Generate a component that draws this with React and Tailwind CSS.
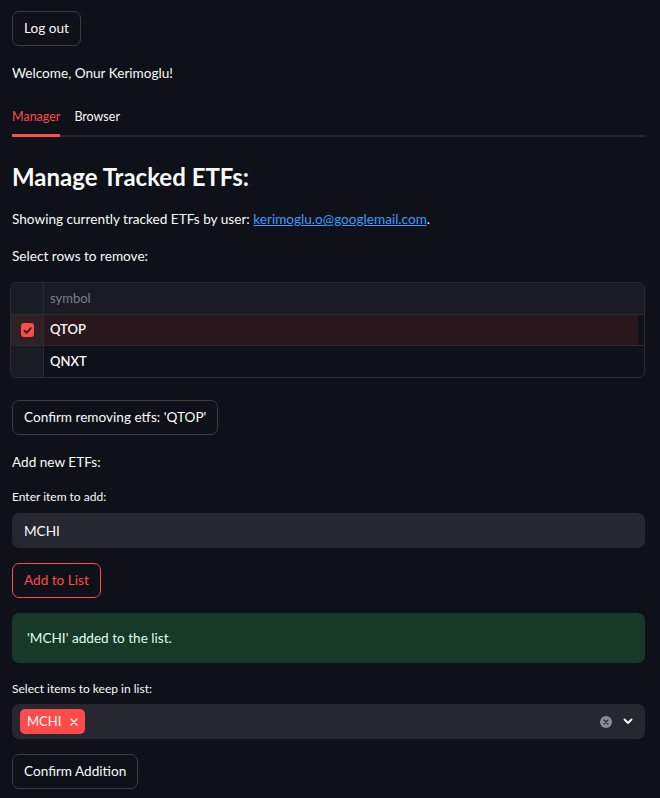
import { useState } from "react";

const font = { fontFamily: "Lato, 'Noto Sans', sans-serif" };

function Button({ children, danger }) {
  return (
    <button
      type="button"
      className={`h-[35px] px-[11px] rounded-[7px] border text-[13.6px] bg-[#0e1117] ${
        danger ? "border-[#ff4b4b] text-[#ff4b4b]" : "border-[#3a3c44] text-[#fafafa]"
      }`}
    >
      {children}
    </button>
  );
}

export default function App() {
  const [tab, setTab] = useState("Manager");
  const [item, setItem] = useState("MCHI");
  const rows = [
    { symbol: "QTOP", checked: true },
    { symbol: "QNXT", checked: false },
  ];

  return (
    <div style={font} className="min-h-[798px] bg-[#0e1117] text-[#fafafa] px-3 pt-[11px] text-[13.6px]">
      <div className="flex">
        <Button>Log out</Button>
      </div>

      <p className="mt-[17px] leading-[20px]">Welcome, Onur Kerimoglu!</p>

      {/* Tabs */}
      <div className="mt-[26px] flex gap-[14px] border-b-2 border-[#262730] mr-[3px]">
        {["Manager", "Browser"].map((t) => (
          <button
            key={t}
            type="button"
            onClick={() => setTab(t)}
            className={`pb-[9px] text-[12.5px] leading-[16px] -mb-[2px] border-b-[3px] ${
              tab === t ? "text-[#ff4b4b] border-[#ff4b4b]" : "text-[#fafafa] border-transparent"
            }`}
          >
            {t}
          </button>
        ))}
      </div>

      <h2 className="mt-[24px] text-[24px] font-bold leading-[32px]">Manage Tracked ETFs:</h2>

      <p className="mt-[16px] leading-[20px]">
        Showing currently tracked ETFs by user:{" "}
        <a href="#" className="text-[#3b9cff] underline">kerimoglu.o@googlemail.com</a>.
      </p>

      <p className="mt-[17px] leading-[20px]">Select rows to remove:</p>

      {/* Data grid */}
      <div className="mt-[16px] -ml-[2px] mr-[3px] rounded-[6px] border border-[#2a2c34] overflow-hidden text-[13px]">
        <div className="flex h-[32px] bg-[#1a1c24] border-b border-[#2a2c34]">
          <div className="w-[33px] border-r border-[#2a2c34]" />
          <div className="flex-1 flex items-center px-[6px] text-[#7d7f86] mr-[6px]">symbol</div>
        </div>
        {rows.map((r, i) => (
          <div
            key={r.symbol}
            className={`flex h-[31px] ${i < rows.length - 1 ? "border-b border-[#2a2c34]" : ""}`}
          >
            <div className={`w-[33px] flex items-center justify-center border-r border-[#2a2c34] ${r.checked ? "bg-[#2f2227]" : "bg-[#1a1c24]"}`}>
              {r.checked && (
                <span className="w-[13px] h-[14px] rounded-[3px] bg-[#ff4b4b] flex items-center justify-center">
                  <svg width="9" height="9" viewBox="0 0 10 10" fill="none">
                    <path d="M1.5 5.2 L4 7.6 L8.6 2.4" stroke="#1a1c24" strokeWidth="1.8" strokeLinecap="round" strokeLinejoin="round" />
                  </svg>
                </span>
              )}
            </div>
            <div className={`flex-1 flex items-center px-[6px] font-semibold mr-[6px] ${r.checked ? "bg-[#2a171d]" : ""}`}>
              {r.symbol}
            </div>
          </div>
        ))}
      </div>

      <div className="mt-[22px] flex">
        <Button>Confirm removing etfs: 'QTOP'</Button>
      </div>

      <p className="mt-[17px] leading-[20px]">Add new ETFs:</p>

      <label className="block mt-[17px] text-[12px] leading-[16px]">Enter item to add:</label>
      <input
        value={item}
        onChange={(e) => setItem(e.target.value)}
        className="block mt-[8px] w-[633px] h-[35px] rounded-[7px] bg-[#262730] px-3 text-[13.6px] text-[#fafafa] outline-none"
      />

      <div className="mt-[15px] flex">
        <Button danger>Add to List</Button>
      </div>

      <div className="mt-[15px] w-[633px] h-[50px] rounded-[7px] bg-[#173928] text-[#dffde9] flex items-center px-[15px]">
        'MCHI' added to the list.
      </div>

      <label className="block mt-[18px] text-[12px] leading-[16px]">Select items to keep in list:</label>
      <div className="mt-[7px] w-[633px] h-[35px] rounded-[7px] bg-[#262730] flex items-center pl-[8px] pr-[12px]">
        <span className="h-[25px] px-[7px] rounded-[5px] bg-[#ff4b4b] text-white text-[13px] flex items-center gap-[9px]">
          MCHI
          <svg width="8" height="8" viewBox="0 0 8 8">
            <path d="M1 1 L7 7 M7 1 L1 7" stroke="white" strokeWidth="1.4" strokeLinecap="round" />
          </svg>
        </span>
        <div className="flex-1" />
        <span className="w-[12px] h-[12px] rounded-full bg-[#8b8d95] flex items-center justify-center">
          <svg width="6" height="6" viewBox="0 0 6 6">
            <path d="M1 1 L5 5 M5 1 L1 5" stroke="#262730" strokeWidth="1.2" strokeLinecap="round" />
          </svg>
        </span>
        <svg className="ml-[11px]" width="10" height="7" viewBox="0 0 10 7" fill="none">
          <path d="M1.5 1.5 L5 5 L8.5 1.5" stroke="#fafafa" strokeWidth="1.8" strokeLinecap="round" strokeLinejoin="round" />
        </svg>
      </div>

      <div className="mt-[15px] pb-[9px] flex">
        <Button>Confirm Addition</Button>
      </div>
    </div>
  );
}
